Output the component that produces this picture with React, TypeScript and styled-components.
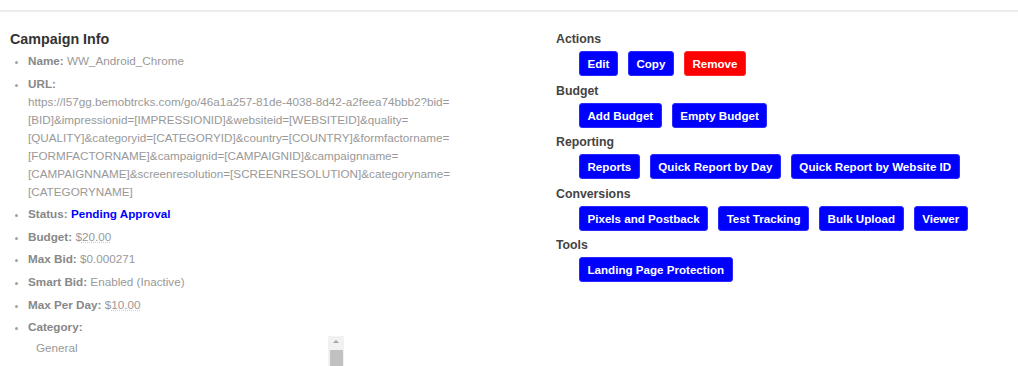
import styled, { createGlobalStyle } from "styled-components";

const GlobalStyle = createGlobalStyle`
  html, body {
    margin: 0;
    padding: 0;
    background: #fff;
    font-family: "Liberation Sans", Arial, sans-serif;
  }
`;

const TopBar = styled.div`
  height: 10px;
  border-bottom: 2px solid #ececec;
`;

const Page = styled.div`
  display: grid;
  grid-template-columns: 546px 1fr;
  padding: 19px 0 0 10px;
  height: 335px;
  overflow: hidden;
`;

const InfoColumn = styled.div``;

const InfoTitle = styled.h2`
  margin: 0 0 4px;
  font-size: 14.3px;
  line-height: 17px;
  font-weight: bold;
  color: #333;
`;

const InfoList = styled.ul`
  margin: 0;
  padding-left: 18px;
  color: #999;
  font-size: 11.7px;
  line-height: 18px;
`;

const InfoItem = styled.li`
  margin-bottom: 4.6px;
  &::marker {
    color: #a0a0a0;
    font-size: 11px;
  }
`;

const Label = styled.b`
  color: #888;
`;

const Value = styled.span<{ $status?: boolean }>`
  color: ${(p) => (p.$status ? "#0000ff" : "#999")};
  font-weight: ${(p) => (p.$status ? "bold" : "normal")};
`;

const Money = styled.span`
  text-decoration: underline dotted #d0d0d0;
  text-underline-offset: 1px;
`;

const UrlText = styled.span`
  display: block;
  width: 430px;
`;

const CategoryBox = styled.div`
  display: flex;
  width: 316px;
  height: 40px;
`;

const CategoryOptions = styled.div`
  flex: 1;
  padding: 3px 0 0 8px;
  color: #999;
`;

const ScrollTrack = styled.div`
  width: 16px;
  background: #f1f1f1;
  display: flex;
  flex-direction: column;
  align-items: center;
`;

const ScrollThumb = styled.div`
  width: 13px;
  height: 18px;
  margin-top: 4px;
  background: #c1c1c1;
`;

const ActionsColumn = styled.div``;

const Section = styled.section`
  margin-bottom: 6.5px;
`;

const SectionTitle = styled.h3`
  margin: 0 0 3px;
  font-size: 12.3px;
  line-height: 17px;
  font-weight: bold;
  color: #444;
`;

const ButtonRow = styled.div`
  display: flex;
  gap: 10px;
  padding-left: 23px;
`;

const ActionButton = styled.button<{ $danger?: boolean }>`
  height: 25px;
  padding: 0 7.5px;
  border: 1px solid ${(p) => (p.$danger ? "#ff2a2a" : "#2a2aff")};
  border-radius: 3px;
  background: ${(p) => (p.$danger ? "#ff0000" : "#0000ff")};
  color: #fff;
  font-family: "Liberation Sans", Arial, sans-serif;
  font-size: 11.6px;
  font-weight: bold;
  cursor: pointer;
`;

const sections: { title: string; buttons: { label: string; danger?: boolean }[] }[] = [
  {
    title: "Actions",
    buttons: [{ label: "Edit" }, { label: "Copy" }, { label: "Remove", danger: true }],
  },
  { title: "Budget", buttons: [{ label: "Add Budget" }, { label: "Empty Budget" }] },
  {
    title: "Reporting",
    buttons: [
      { label: "Reports" },
      { label: "Quick Report by Day" },
      { label: "Quick Report by Website ID" },
    ],
  },
  {
    title: "Conversions",
    buttons: [
      { label: "Pixels and Postback" },
      { label: "Test Tracking" },
      { label: "Bulk Upload" },
      { label: "Viewer" },
    ],
  },
  { title: "Tools", buttons: [{ label: "Landing Page Protection" }] },
];

const url =
  "https://l57gg.bemobtrcks.com/go/46a1a257-81de-4038-8d42-a2feea74bbb2?bid=\u200B[BID]&impressionid=[IMPRESSIONID]&websiteid=[WEBSITEID]&quality=\u200B[QUALITY]&categoryid=[CATEGORYID]&country=[COUNTRY]&formfactorname=\u200B[FORMFACTORNAME]&campaignid=[CAMPAIGNID]&campaignname=\u200B[CAMPAIGNNAME]&screenresolution=[SCREENRESOLUTION]&categoryname=\u200B[CATEGORYNAME]";

export default function App() {
  return (
    <>
      <GlobalStyle />
      <TopBar />
      <Page>
        <InfoColumn>
          <InfoTitle>Campaign Info</InfoTitle>
          <InfoList>
            <InfoItem>
              <Label>Name:</Label> <Value>WW_Android_Chrome</Value>
            </InfoItem>
            <InfoItem>
              <Label>URL:</Label>
              <UrlText>{url}</UrlText>
            </InfoItem>
            <InfoItem>
              <Label>Status:</Label> <Value $status>Pending Approval</Value>
            </InfoItem>
            <InfoItem>
              <Label>Budget:</Label> <Value>$<Money>20.00</Money></Value>
            </InfoItem>
            <InfoItem>
              <Label>Max Bid:</Label> <Value>$0.000271</Value>
            </InfoItem>
            <InfoItem>
              <Label>Smart Bid:</Label> <Value>Enabled (Inactive)</Value>
            </InfoItem>
            <InfoItem>
              <Label>Max Per Day:</Label> <Value>$<Money>10.00</Money></Value>
            </InfoItem>
            <InfoItem>
              <Label>Category:</Label>
              <CategoryBox>
                <CategoryOptions>General</CategoryOptions>
                <ScrollTrack>
                  <svg width="16" height="10" viewBox="0 0 16 10">
                    <path d="M5 7 L8 4 L11 7 Z" fill="#a3a3a3" />
                  </svg>
                  <ScrollThumb />
                </ScrollTrack>
              </CategoryBox>
            </InfoItem>
          </InfoList>
        </InfoColumn>
        <ActionsColumn>
          {sections.map((s) => (
            <Section key={s.title}>
              <SectionTitle>{s.title}</SectionTitle>
              <ButtonRow>
                {s.buttons.map((b) => (
                  <ActionButton key={b.label} $danger={b.danger}>
                    {b.label}
                  </ActionButton>
                ))}
              </ButtonRow>
            </Section>
          ))}
        </ActionsColumn>
      </Page>
    </>
  );
}
